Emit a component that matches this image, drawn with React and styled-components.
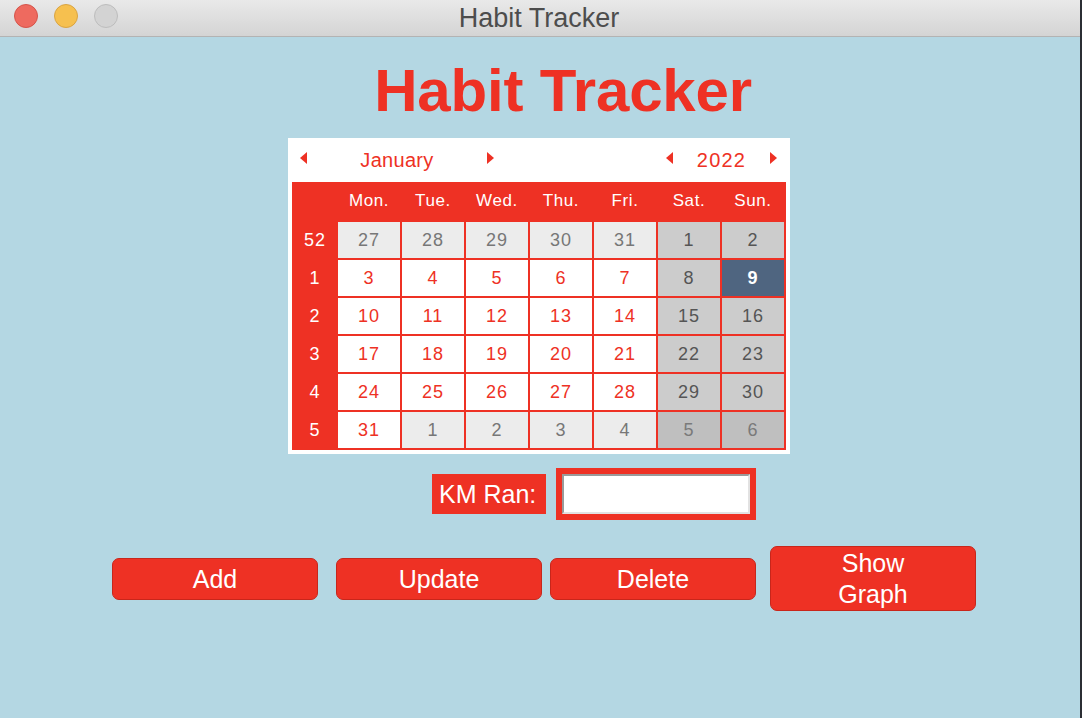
import React from "react";
import styled, { createGlobalStyle } from "styled-components";

const RED = "#ee3124";

const Global = createGlobalStyle`
  html, body { margin: 0; padding: 0; }
  body {
    width: 1082px;
    height: 718px;
    overflow: hidden;
    font-family: "Liberation Sans", Arial, sans-serif;
    background: #b4d7e3;
  }
`;

const Screen = styled.div`
  display: flex;
  width: 1082px;
  height: 718px;
`;

const Window = styled.div`
  flex: 1;
  display: flex;
  flex-direction: column;
  background: #b4d7e3;
`;

const EdgeStrip = styled.div`
  width: 2px;
  background: #2b2e34;
`;

const TitleBar = styled.div`
  position: relative;
  height: 36px;
  border-bottom: 1px solid #b3b3b3;
  background: linear-gradient(#e9e9e9, #d4d4d4);
  display: flex;
  align-items: center;
  justify-content: center;
`;

const Lights = styled.div`
  position: absolute;
  left: 14px;
  top: 4px;
  display: flex;
  gap: 16px;
`;

const Light = styled.span`
  width: 22px;
  height: 22px;
  border-radius: 50%;
  background: ${(p) => p.$bg};
  border: 1px solid ${(p) => p.$bd};
`;

const WindowTitle = styled.div`
  font-size: 27px;
  color: #4d4d4d;
  margin-left: -2px;
`;

const Content = styled.div`
  display: flex;
  flex-direction: column;
  align-items: center;
`;

const Heading = styled.h1`
  margin: 24px 0 0 0;
  padding-left: 46px;
  font-size: 60px;
  line-height: 60px;
  font-weight: bold;
  letter-spacing: -0.2px;
  color: ${RED};
`;

const Calendar = styled.div`
  margin-top: 17px;
  margin-left: -2px;
  background: #ffffff;
  padding: 4px;
  width: 494px;
`;

const CalHeader = styled.div`
  height: 36px;
  margin-bottom: 4px;
  display: flex;
  align-items: center;
  justify-content: space-between;
  padding: 0 9px 0 8px;
`;

const Spinner = styled.div`
  display: flex;
  align-items: center;
  width: ${(p) => p.$w}px;
`;

const Arrow = styled.span`
  width: 0;
  height: 0;
  margin-bottom: 4px;
  border-top: 6px solid transparent;
  border-bottom: 6px solid transparent;
  ${(p) =>
    p.$dir === "left"
      ? `border-right: 7px solid ${RED};`
      : `border-left: 7px solid ${RED};`}
`;

const SpinLabel = styled.span`
  flex: 1;
  text-align: center;
  font-size: 20px;
  color: ${RED};
  letter-spacing: ${(p) => (p.$wide ? "1.2px" : "0.3px")};
`;

const Grid = styled.div`
  display: grid;
  grid-template-columns: 44px repeat(7, 62px);
  grid-template-rows: 38px repeat(6, 36px);
  column-gap: 2px;
  row-gap: 2px;
  padding: 0 2px 2px 0;
  background: ${RED};
`;

const DayName = styled.div`
  display: flex;
  align-items: center;
  justify-content: center;
  color: #ffffff;
  font-size: 17px;
  letter-spacing: 0.6px;
`;

const WeekNum = styled.div`
  display: flex;
  align-items: center;
  justify-content: center;
  padding-left: 2px;
  color: #ffffff;
  font-size: 18px;
  letter-spacing: 1px;
`;

const Day = styled.div`
  display: flex;
  align-items: center;
  justify-content: center;
  font-size: 18px;
  letter-spacing: 1px;
  background: ${(p) => p.$bg};
  color: ${(p) => p.$fg};
  font-weight: ${(p) => (p.$bold ? "bold" : "normal")};
`;

const KmRow = styled.div`
  align-self: stretch;
  display: flex;
  align-items: center;
  padding-left: 432px;
  margin-top: 14px;
  gap: 10px;
`;

const KmLabel = styled.div`
  height: 40px;
  width: 114px;
  box-sizing: border-box;
  padding-left: 7px;
  display: flex;
  align-items: center;
  background: ${RED};
  color: #ffffff;
  font-size: 25px;
`;

const EntryFrame = styled.div`
  width: 188px;
  height: 40px;
  border: 6px solid ${RED};
`;

const Entry = styled.input`
  display: block;
  width: 100%;
  height: 100%;
  box-sizing: border-box;
  margin: 0;
  padding: 0 4px;
  background: #ffffff;
  border-style: solid;
  border-width: 2px;
  border-color: #9a9a9a #e2e2e2 #e2e2e2 #9a9a9a;
  outline: none;
  font-family: inherit;
  font-size: 20px;
`;

const ButtonRow = styled.div`
  align-self: stretch;
  display: flex;
  align-items: center;
  padding-left: 112px;
  margin-top: 26px;
`;

const Button = styled.button`
  width: 206px;
  height: ${(p) => (p.$tall ? 65 : 42)}px;
  margin-left: ${(p) => p.$ml || 0}px;
  box-sizing: border-box;
  border: 1px solid #c8261b;
  border-radius: 7px;
  background: ${RED};
  color: #ffffff;
  font-family: "Liberation Sans", Arial, sans-serif;
  font-size: 25px;
  line-height: 31px;
  padding: 0;
  padding-top: ${(p) => (p.$tall ? 0 : 2)}px;
  cursor: pointer;
`;

const DAY_NAMES = ["Mon.", "Tue.", "Wed.", "Thu.", "Fri.", "Sat.", "Sun."];

const WEEKS = [
  { n: 52, days: [27, 28, 29, 30, 31, 1, 2], other: [0, 1, 2, 3, 4] },
  { n: 1, days: [3, 4, 5, 6, 7, 8, 9], other: [] },
  { n: 2, days: [10, 11, 12, 13, 14, 15, 16], other: [] },
  { n: 3, days: [17, 18, 19, 20, 21, 22, 23], other: [] },
  { n: 4, days: [24, 25, 26, 27, 28, 29, 30], other: [] },
  { n: 5, days: [31, 1, 2, 3, 4, 5, 6], other: [1, 2, 3, 4, 5, 6] },
];

function dayStyle(other, weekend, selected) {
  if (selected) return { bg: "#4f6580", fg: "#ffffff", bold: true };
  if (other && weekend) return { bg: "#bfbfbf", fg: "#7a7a7a" };
  if (other) return { bg: "#ececec", fg: "#777777" };
  if (weekend) return { bg: "#cccccc", fg: "#555555" };
  return { bg: "#ffffff", fg: RED };
}

export default function App() {
  return (
    <>
      <Global />
      <Screen>
        <Window>
          <TitleBar>
            <Lights>
              <Light $bg="#ee6a5f" $bd="#d5544a" />
              <Light $bg="#f6c04f" $bd="#d9a443" />
              <Light $bg="#d3d3d3" $bd="#bdbdbd" />
            </Lights>
            <WindowTitle>Habit Tracker</WindowTitle>
          </TitleBar>
          <Content>
            <Heading>Habit Tracker</Heading>
            <Calendar>
              <CalHeader>
                <Spinner $w={194}>
                  <Arrow $dir="left" />
                  <SpinLabel>January</SpinLabel>
                  <Arrow $dir="right" />
                </Spinner>
                <Spinner $w={111}>
                  <Arrow $dir="left" />
                  <SpinLabel $wide>2022</SpinLabel>
                  <Arrow $dir="right" />
                </Spinner>
              </CalHeader>
              <Grid>
                <DayName />
                {DAY_NAMES.map((d) => (
                  <DayName key={d}>{d}</DayName>
                ))}
                {WEEKS.map((w) => (
                  <React.Fragment key={w.n}>
                    <WeekNum>{w.n}</WeekNum>
                    {w.days.map((d, i) => {
                      const s = dayStyle(
                        w.other.includes(i),
                        i >= 5,
                        w.n === 1 && d === 9
                      );
                      return (
                        <Day key={i} $bg={s.bg} $fg={s.fg} $bold={s.bold}>
                          {d}
                        </Day>
                      );
                    })}
                  </React.Fragment>
                ))}
              </Grid>
            </Calendar>
            <KmRow>
              <KmLabel>KM Ran:</KmLabel>
              <EntryFrame>
                <Entry type="text" />
              </EntryFrame>
            </KmRow>
            <ButtonRow>
              <Button>Add</Button>
              <Button $ml={18}>Update</Button>
              <Button $ml={8}>Delete</Button>
              <Button $ml={14} $tall>
                Show
                <br />
                Graph
              </Button>
            </ButtonRow>
          </Content>
        </Window>
        <EdgeStrip />
      </Screen>
    </>
  );
}
